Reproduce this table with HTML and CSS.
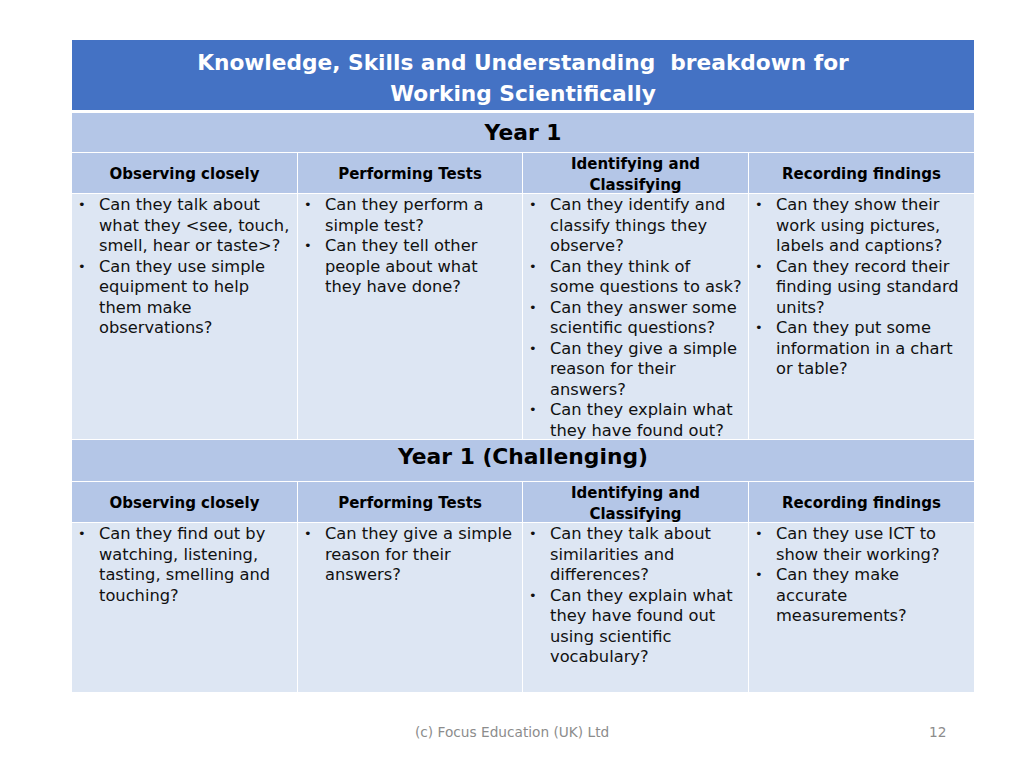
FILE: index.html
```html
<!DOCTYPE html>
<html>
<head>
<meta charset="utf-8">
<link rel="stylesheet" href="styles.css">
</head>
<body>
<div class="slide">
  <div class="sheet">
    <div class="title">Knowledge, Skills and Understanding&nbsp; breakdown for<br>Working Scientifically</div>
    <div class="band">Year 1</div>
    <div class="grid grid1">
      <div class="head">Observing closely</div>
      <div class="head">Performing Tests</div>
      <div class="head">Identifying and<br>Classifying</div>
      <div class="head">Recording findings</div>
      <div class="cell">
        <ul>
          <li>Can they talk about<br>what they &lt;see, touch,<br>smell, hear or taste&gt;?</li>
          <li>Can they use simple<br>equipment to help<br>them make<br>observations?</li>
        </ul>
      </div>
      <div class="cell">
        <ul>
          <li>Can they perform a<br>simple test?</li>
          <li>Can they tell other<br>people about what<br>they have done?</li>
        </ul>
      </div>
      <div class="cell">
        <ul>
          <li>Can they identify and<br>classify things they<br>observe?</li>
          <li>Can they think of<br>some questions to ask?</li>
          <li>Can they answer some<br>scientific questions?</li>
          <li>Can they give a simple<br>reason for their<br>answers?</li>
          <li>Can they explain what<br>they have found out?</li>
        </ul>
      </div>
      <div class="cell">
        <ul>
          <li>Can they show their<br>work using pictures,<br>labels and captions?</li>
          <li>Can they record their<br>finding using standard<br>units?</li>
          <li>Can they put some<br>information in a chart<br>or table?</li>
        </ul>
      </div>
    </div>
    <div class="band band2">Year 1 (Challenging)</div>
    <div class="grid grid2">
      <div class="head">Observing closely</div>
      <div class="head">Performing Tests</div>
      <div class="head">Identifying and<br>Classifying</div>
      <div class="head">Recording findings</div>
      <div class="cell">
        <ul>
          <li>Can they find out by<br>watching, listening,<br>tasting, smelling and<br>touching?</li>
        </ul>
      </div>
      <div class="cell">
        <ul>
          <li>Can they give a simple<br>reason for their<br>answers?</li>
        </ul>
      </div>
      <div class="cell">
        <ul>
          <li>Can they talk about<br>similarities and<br>differences?</li>
          <li>Can they explain what<br>they have found out<br>using scientific<br>vocabulary?</li>
        </ul>
      </div>
      <div class="cell">
        <ul>
          <li>Can they use ICT to<br>show their working?</li>
          <li>Can they make<br>accurate<br>measurements?</li>
        </ul>
      </div>
    </div>
  </div>
  <div class="footer">
    <span class="copy">(c) Focus Education (UK) Ltd</span>
    <span class="page">12</span>
  </div>
</div>
</body>
</html>
```

FILE: styles.css
```css
html, body {
  margin: 0;
  padding: 0;
  background: #ffffff;
}
body {
  font-family: "DejaVu Sans", "Liberation Sans", sans-serif;
  color: #000000;
}
.slide {
  width: 1024px;
  height: 768px;
  position: relative;
  overflow: hidden;
}
.sheet {
  width: 902px;
  margin: 40px 0 0 72px;
  display: flex;
  flex-direction: column;
}
.title {
  background: #4472c4;
  color: #ffffff;
  height: 70px;
  box-sizing: border-box;
  padding-top: 7px;
  text-align: center;
  font-weight: bold;
  font-size: 21.7px;
  line-height: 31px;
}
.band {
  background: #b4c6e7;
  height: 39px;
  margin-top: 3px;
  text-align: center;
  font-weight: bold;
  font-size: 21.8px;
  line-height: 40px;
}
.band2 {
  margin-top: 1px;
  height: 41px;
  line-height: 34px;
}
.grid {
  margin-top: 1px;
  display: grid;
  grid-template-columns: 225px 224px 225px 225px;
  column-gap: 1px;
  row-gap: 1px;
}
.grid1 { grid-template-rows: 40px 245px; }
.grid2 { grid-template-rows: 40px 169px; }
.head {
  background: #b4c6e7;
  box-sizing: border-box;
  padding-top: 3px;
  display: flex;
  align-items: center;
  justify-content: center;
  text-align: center;
  font-weight: bold;
  font-size: 15px;
  line-height: 20.5px;
}
.cell {
  background: #dde6f3;
  font-size: 16.3px;
  line-height: 20.5px;
  color: #111111;
  min-height: 0;
  box-sizing: border-box;
  padding-top: 1px;
}
.cell ul {
  list-style: none;
  margin: 0;
  padding: 0 0 0 27px;
}
.cell li {
  position: relative;
  white-space: nowrap;
}
.cell li::before {
  content: "\2022";
  position: absolute;
  left: -21px;
  top: 0;
  font-size: 13px;
}
.footer {
  position: absolute;
  left: 0;
  top: 724px;
  width: 1024px;
  height: 20px;
  font-size: 13.7px;
  color: #8c8c8c;
}
.copy {
  position: absolute;
  left: 415px;
  top: 0;
}
.page {
  position: absolute;
  left: 929px;
  top: 0;
}
```
